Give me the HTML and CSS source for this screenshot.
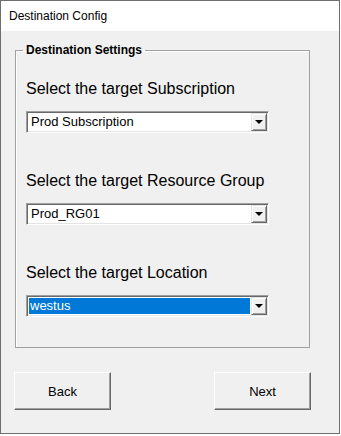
FILE: index.html
```html
<!DOCTYPE html>
<html lang="en">
<head>
    <meta charset="UTF-8">
    <title>Destination Config</title>
    <link rel="stylesheet" href="styles.css">
</head>
<body>
<div class="window">
    <div class="titlebar">Destination Config</div>
    <div class="client">
        <fieldset class="group">
            <legend>Destination Settings</legend>
            <div class="field">
                <label>Select the target Subscription</label>
                <div class="combo">
                    <span class="combo-value">Prod Subscription</span>
                    <span class="combo-btn"><span class="arrow"></span></span>
                </div>
            </div>
            <div class="field">
                <label>Select the target Resource Group</label>
                <div class="combo">
                    <span class="combo-value">Prod_RG01</span>
                    <span class="combo-btn"><span class="arrow"></span></span>
                </div>
            </div>
            <div class="field">
                <label>Select the target Location</label>
                <div class="combo focused">
                    <span class="combo-value">westus</span>
                    <span class="combo-btn"><span class="arrow"></span></span>
                </div>
            </div>
        </fieldset>
        <div class="buttons">
            <button class="btn">Back</button>
            <button class="btn">Next</button>
        </div>
    </div>
</div>
</body>
</html>
```

FILE: styles.css
```css
body {
    margin: 0;
    padding: 0;
    background: #ffffff;
    font-family: "Liberation Sans", Arial, sans-serif;
    color: #000;
}
.window {
    width: 340px;
    height: 434px;
    box-sizing: border-box;
    border: 1px solid #6f6f6f;
    display: flex;
    flex-direction: column;
    background: #f0f0f0;
}
.titlebar {
    height: 30px;
    line-height: 30px;
    padding-left: 8px;
    background: #fff;
    font-size: 12px;
}
.client {
    flex: 1;
    background: #f0f0f0;
    padding: 12px 0 0 14px;
}
.group {
    margin: 0;
    width: 295px;
    height: 305px;
    box-sizing: border-box;
    padding: 23px 0 0 10px;
    border: 1px solid #a0a0a0;
    box-shadow: inset 1px 1px #fff;
}
.group legend {
    padding: 0 3px;
    margin-left: -3px;
    font-size: 12px;
    font-weight: bold;
    line-height: 14px;
}
.field {
    display: flex;
    flex-direction: column;
    margin-bottom: 39px;
}
.field label {
    font-size: 16px;
    line-height: 18px;
    margin-bottom: 13px;
}
.combo {
    width: 243px;
    height: 22px;
    box-sizing: border-box;
    display: flex;
    align-items: stretch;
    background: #fff;
    border: 1px solid;
    border-color: #a0a0a0 #fff #fff #a0a0a0;
    box-shadow: inset 1px 1px #696969, inset -1px -1px #e3e3e3;
    padding: 2px 2px 2px 2px;
}
.combo-value {
    flex: 1;
    font-size: 13px;
    line-height: 16px;
    padding-left: 2px;
    margin-right: 1px;
}
.combo.focused .combo-value {
    background: #0078d7;
    color: #fff;
    padding-left: 1px;
}
.combo-btn {
    width: 16px;
    box-sizing: border-box;
    margin: -1px -1px -1px 0;
    background: #f0f0f0;
    border: 1px solid;
    border-color: #e3e3e3 #696969 #696969 #e3e3e3;
    box-shadow: inset 1px 1px #fff, inset -1px -1px #a0a0a0;
    display: flex;
    align-items: center;
    justify-content: center;
}
.arrow {
    width: 0;
    height: 0;
    border-left: 4px solid transparent;
    border-right: 4px solid transparent;
    border-top: 4px solid #000;
}
.buttons {
    display: flex;
    justify-content: space-between;
    width: 297px;
    margin: 24px 0 0 -1px;
}
.btn {
    width: 97px;
    height: 38px;
    box-sizing: border-box;
    background: #f0f0f0;
    border: 1px solid;
    border-color: #fff #696969 #696969 #fff;
    box-shadow: inset -1px -1px #a0a0a0;
    font-family: "Liberation Sans", Arial, sans-serif;
    font-size: 13px;
    color: #000;
    padding: 0;
}
```
